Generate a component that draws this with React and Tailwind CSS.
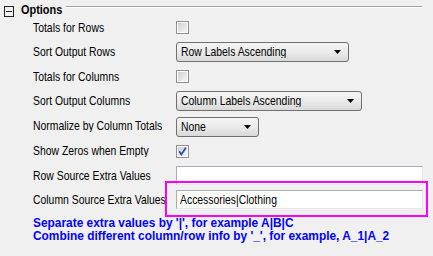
import React from "react";

function T({ children, className = "" }) {
  return (
    <span className={"inline-block origin-left scale-x-[0.8] whitespace-nowrap " + className}>{children}</span>
  );
}

function Checkbox({ checked }) {
  return (
    <div className="w-[13px] h-[13px] border border-[#8e8f8f] bg-white p-[1px]">
      <div className="w-full h-full bg-gradient-to-br from-[#d2d2d2] to-[#f4f4f4] flex items-center justify-center">
        {checked && (
          <svg width="9" height="9" viewBox="0 0 9 9">
            <path d="M1.2 4.2 L3.4 7.4 L7.8 0.8" fill="none" stroke="#2b45b8" strokeWidth="1.7" />
          </svg>
        )}
      </div>
    </div>
  );
}

function Dropdown({ value, width }) {
  return (
    <div
      className="h-[20px] border border-[#707070] rounded-[3px] bg-gradient-to-b from-[#f4f4f4] via-[#ebebeb] to-[#d9d9d9] flex items-center pl-[4px] pr-[7px] text-black overflow-hidden"
      style={{ width }}
    >
      <div className="flex-1 overflow-hidden">
        <T>{value}</T>
      </div>
      <svg width="7" height="4" viewBox="0 0 7 4">
        <path d="M0 0 H7 L3.5 4 Z" fill="#000" />
      </svg>
    </div>
  );
}

function TextBox({ value }) {
  return (
    <div className="h-[19px] w-[247px] border border-[#abadb3] border-b-[#e3e9ef] border-r-[#e3e9ef] bg-white flex items-center pl-[3px] text-black overflow-hidden">
      <T>{value}</T>
    </div>
  );
}

function Row({ label, h, children, offset = 0 }) {
  return (
    <div className="flex items-center" style={{ height: h }}>
      <div className="w-[143px] overflow-hidden">
        <T>{label}</T>
      </div>
      <div style={{ marginTop: offset }}>{children}</div>
    </div>
  );
}

export default function App() {
  return (
    <div className="relative w-[433px] h-[256px] overflow-hidden bg-[#f0f0f0] text-[13px] leading-none text-black font-['Liberation_Sans',Arial,sans-serif]">
      <div className="flex items-start h-[15px]">
        <div className="ml-[4px] mt-[6px] w-[10px] h-[11px] border border-[#222] flex items-center justify-center">
          <div className="w-[6px] h-[1px] bg-[#222]" />
        </div>
        <div className="ml-[7px] mt-[3px] w-[42px] font-bold text-[13px] text-black">
          <span className="inline-block origin-left scale-x-[0.84] whitespace-nowrap">Options</span>
        </div>
        <div className="flex-1 ml-[3px] mr-[11px] mt-[6px] h-[2px] border-t border-[#a0a0a0] border-b border-b-white" />
      </div>
      <div className="pl-[33px]">
        <Row label="Totals for Rows" h={24} offset={1}>
          <Checkbox />
        </Row>
        <Row label="Sort Output Rows" h={25}>
          <Dropdown value="Row Labels Ascending" width={173} />
        </Row>
        <Row label="Totals for Columns" h={24} offset={1}>
          <Checkbox />
        </Row>
        <Row label="Sort Output Columns" h={25}>
          <Dropdown value="Column Labels Ascending" width={186} />
        </Row>
        <Row label="Normalize by Column Totals" h={25} offset={2}>
          <Dropdown value="None" width={83} />
        </Row>
        <Row label="Show Zeros when Empty" h={25} offset={2}>
          <Checkbox checked />
        </Row>
        <Row label="Row Source Extra Values" h={24}>
          <TextBox value="" />
        </Row>
        <Row label="Column Source Extra Values" h={25}>
          <TextBox value="Accessories|Clothing" />
        </Row>
        <div className="mt-[4px] font-bold text-[13px] leading-[13px] text-[#0000ff]">
          <div>
            <span className="inline-block origin-left scale-x-[0.915] whitespace-nowrap">Separate extra values by '|', for example A|B|C</span>
          </div>
          <div>
            <span className="inline-block origin-left scale-x-[0.915] whitespace-nowrap">Combine different column/row info by '_', for example, A_1|A_2</span>
          </div>
        </div>
      </div>
      <div className="absolute left-[165px] top-[181px] w-[263px] h-[36px] border-2 border-[#ff00ff]" />
    </div>
  );
}
